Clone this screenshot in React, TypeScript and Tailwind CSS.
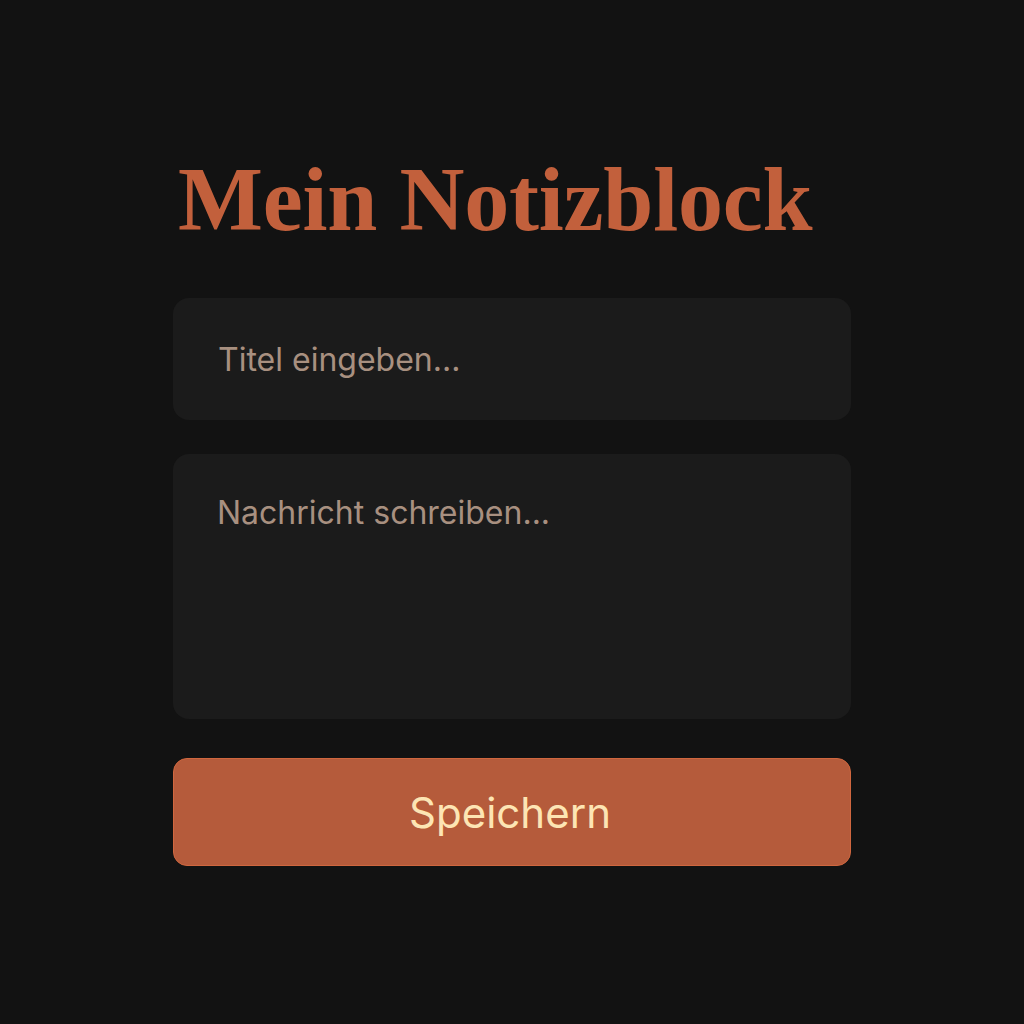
import React from "react";

export default function App() {
  return (
    <div className="min-h-[1024px] w-full bg-[#121212] font-['Inter','Noto_Sans',sans-serif]">
      <div className="ml-[173px] flex w-[678px] flex-col pt-[150px]">
        <h1 className="ml-[5px] font-['Liberation_Serif','DejaVu_Serif',serif] text-[90px] font-bold leading-[100px] tracking-[-0.2px] text-[#c2603c]">
          Mein Notizblock
        </h1>
        <input
          placeholder="Titel eingeben..."
          className="mt-[48px] h-[122px] w-full rounded-[16px] bg-[#1b1b1b] px-[45px] text-[32px] text-[#a89080] outline-none placeholder:text-[#a89080]"
        />
        <textarea
          placeholder="Nachricht schreiben..."
          className="mt-[34px] h-[265px] w-full resize-none rounded-[16px] bg-[#1b1b1b] px-[44px] pt-[35px] text-[32px] text-[#a89080] outline-none placeholder:text-[#a89080]"
        />
        <button className="mt-[39px] h-[108px] w-full rounded-[14px] border border-[#d0673f] bg-[#b55b3b] pr-[4px] text-[42px] text-[#fde5b4]">
          Speichern
        </button>
      </div>
    </div>
  );
}
